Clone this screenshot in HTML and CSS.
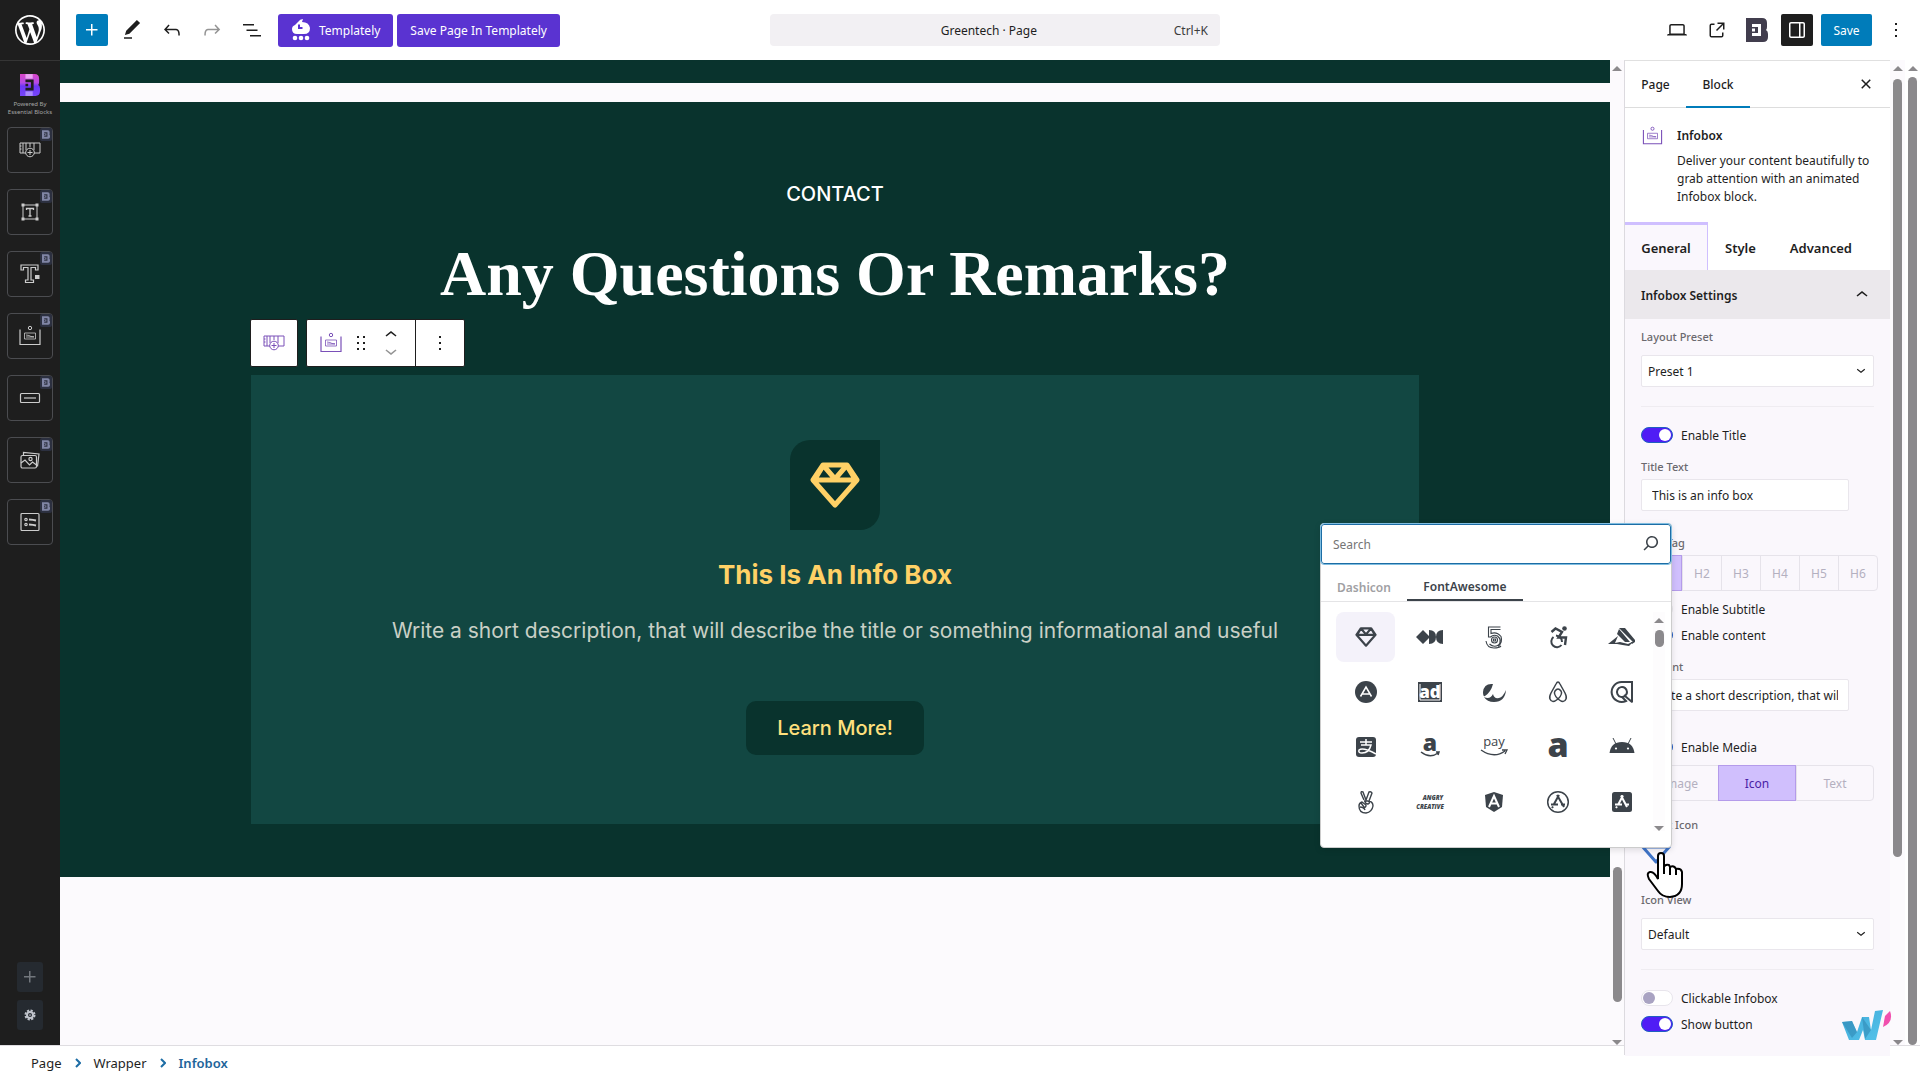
FILE: index.html
```html
<!DOCTYPE html>
<html lang="en">
  <head>
    <meta charset="UTF-8" />
    <meta name="viewport" content="width=device-width, initial-scale=1.0" />
    <title>Greentech · Page</title>
    <link rel="stylesheet" href="styles.css">
  </head>
  <body>
    <svg class="sprite" aria-hidden="true">
      <symbol id="diamond" viewBox="0 0 50 46">
        <path fill="none" stroke="currentColor" stroke-width="5" stroke-linejoin="round" d="M13 3h24l10 15-22 25L3 18zM3 18h44M13 3l12 14L37 3M13 4L5 17M37 4l8 13" />
      </symbol>
      <symbol id="eb" viewBox="0 0 22 24">
        <path fill-rule="evenodd" d="M0 0h16q5 0 5 5v4q0 2-1 3 2 1 2 4v3q0 5-5 5H0zM6 6v3h6v6H6v3h9V6zM6 10.500v3h3v-3z" />
      </symbol>
      <symbol id="infobox" viewBox="0 0 22 22">
        <g fill="none" stroke="currentColor">
          <path stroke-width="1.200" d="M1 4.500v15h20v-15" />
          <circle cx="11" cy="3" r="1.700" />
          <path stroke-width=".8" d="M5.500 8h11v6h-11zM7 10l3 .5 2 1 3 .3M7 12h8" />
        </g>
      </symbol>
      <symbol id="wrapper" viewBox="0 0 22 16">
        <g fill="none" stroke="currentColor">
          <path d="M7 11H1V1h20v10h-6M4 1v10M7 1v7M11 1v4M15 1v7M1 4h1.500M1 7h1.500" />
          <circle cx="11" cy="10.500" r="4.300" />
          <path d="M11 8v5M8.500 10.500h5" />
        </g>
      </symbol>
      <symbol id="up" viewBox="0 0 24 24"><path d="M6.500 12.400L12 8l5.500 4.400-.9 1.200L12 10l-4.500 3.600-1-1.200z" /></symbol>
      <symbol id="down" viewBox="0 0 24 24"><path d="M17.500 11.600L12 16l-5.500-4.400.9-1.200L12 14l4.500-3.600 1 1.200z" /></symbol>
      <symbol id="more" viewBox="0 0 24 24"><path d="M13 19h-2v-2h2v2zm0-6h-2v-2h2v2zm0-6h-2V5h2v2z" /></symbol>
      <symbol id="plus" viewBox="0 0 24 24"><path d="M11 12.500V17.500H12.500V12.500H17.500V11H12.500V6H11V11H6V12.500H11Z" /></symbol>
      <linearGradient id="ebfill" x1="0" y1="0" x2="0" y2="1">
        <stop offset="0" stop-color="#d946c8" /><stop offset=".4" stop-color="#b44be6" /><stop offset=".55" stop-color="#6c35f5" /><stop offset="1" stop-color="#7646fa" />
      </linearGradient>
      <linearGradient id="wfill" x1="0" y1="0" x2="1" y2="1">
        <stop offset="0" stop-color="#3fa9d8" /><stop offset="1" stop-color="#55c3ea" />
      </linearGradient>
    </svg>

    <div class="editor">
      <nav class="rail" aria-label="Quick blocks">
        <a class="wp" href="#" aria-label="WordPress">
          <svg viewBox="0 0 20 20"><path d="M20 10c0-5.510-4.490-10-10-10C4.480 0 0 4.490 0 10c0 5.520 4.480 10 10 10 5.510 0 10-4.480 10-10zM7.780 15.370L4.370 6.220c.55-.02 1.170-.08 1.170-.08.5-.06.44-1.130-.06-1.110 0 0-1.450.11-2.370.11-.18 0-.37 0-.58-.01C4.120 2.690 6.870 1.110 10 1.110c2.330 0 4.450.87 6.050 2.340-.68-.11-1.650.39-1.650 1.580 0 .74.45 1.360.9 2.100.35.61.55 1.360.55 2.460 0 1.490-1.400 5-1.400 5l-3.030-8.370c.54-.02.82-.17.82-.17.5-.05.44-1.250-.06-1.220 0 0-1.440.12-2.380.12-.87 0-2.330-.12-2.330-.12-.5-.03-.56 1.200-.06 1.220l.92.08 1.260 3.410zM17.410 10c.24-.64.74-1.870.43-4.250.7 1.290 1.050 2.710 1.050 4.250 0 3.290-1.730 6.240-4.400 7.780.97-2.590 1.940-5.200 2.920-7.780zM6.100 18.090C3.120 16.650 1.110 13.530 1.110 10c0-1.300.23-2.480.72-3.590C3.250 10.300 4.670 14.200 6.100 18.090zm4.030-6.630l2.580 6.980c-.86.29-1.760.45-2.710.45-.79 0-1.570-.11-2.290-.33.81-2.380 1.620-4.740 2.420-7.100z" /></svg>
        </a>
        <div class="powered">
          <svg viewBox="0 0 22 24"><use href="#eb" fill="url(#ebfill)" /><path fill="#e9a5f2" d="M6 0h8v5H6z" /><path fill="#a98bfb" d="M6 19h8v5H6z" /></svg>
          <span>Powered By<br />Essential Blocks</span>
        </div>
        <div class="blocks">
          <button aria-label="Wrapper"><svg class="icon wide"><use href="#wrapper" /></svg><i><svg><use href="#eb" /></svg></i></button>
          <button aria-label="Text">
            <svg class="icon" viewBox="0 0 22 22"><g fill="none" stroke="currentColor"><path d="M4 4h14v14H4z" /><path stroke-width="1.300" d="M7.500 9V7.500h7V9M11 7.500V15M9.500 15h3" /></g><path d="M2.500 2.500h3v3h-3zM16.500 2.500h3v3h-3zM2.500 16.500h3v3h-3zM16.500 16.500h3v3h-3z" /></svg><i><svg><use href="#eb" /></svg></i>
          </button>
          <button aria-label="Heading">
            <svg class="icon" viewBox="0 0 22 22"><path fill="none" stroke="currentColor" stroke-width="1.200" d="M2 2h17v5h-2.500V4.500h-4.500v12.500h2.500v2.500H6.500V17H9V4.500H4.500V7H2z" /><path d="M16 12h4.500v4H16z" /></svg><i><svg><use href="#eb" /></svg></i>
          </button>
          <button aria-label="Infobox"><svg class="icon"><use href="#infobox" /></svg><i><svg><use href="#eb" /></svg></i></button>
          <button aria-label="Button">
            <svg class="icon" viewBox="0 0 22 22"><g fill="none" stroke="currentColor" stroke-width="1.200"><rect x="1.500" y="6.500" width="19" height="9" rx="1" /><path d="M5 11h12" /></g></svg><i><svg><use href="#eb" /></svg></i>
          </button>
          <button aria-label="Image gallery">
            <svg class="icon" viewBox="0 0 22 22"><g fill="none" stroke="currentColor" stroke-width="1.200"><rect x="2" y="6.500" width="15.500" height="12.500" rx="1.500" /><path d="M4.500 6V3.500l15.500 1.500-1.500 12.500M2 14l4-3 4.500 5 3-3 4 3" /><circle cx="11.500" cy="10" r="1.600" /></g></svg><i><svg><use href="#eb" /></svg></i>
          </button>
          <button aria-label="Form">
            <svg class="icon" viewBox="0 0 22 22"><g fill="none" stroke="currentColor" stroke-width="1.200"><rect x="2" y="2.500" width="18" height="17" rx="1" /><circle cx="7" cy="8.500" r="1.200" /><circle cx="7" cy="13.500" r="1.200" /><path stroke-width="1.800" d="M10 8.500l4 .3 3 .7M10 13.500l4 .3 3 .7" /></g></svg><i><svg><use href="#eb" /></svg></i>
          </button>
        </div>
        <div class="rail-end">
          <button aria-label="Add block"><svg><use href="#plus" /></svg></button>
          <button class="gear" aria-label="Settings"><svg viewBox="0 0 24 24"><g fill="none" stroke="currentColor"><circle cx="12" cy="12" r="4.500" stroke-width="3" /><circle cx="12" cy="12" r="6.800" stroke-width="3" stroke-dasharray="3.300 2.040" /></g><circle cx="12" cy="12" r="1.300" /></svg></button>
        </div>
      </nav>

      <div class="main">
        <header class="topbar">
          <div class="tools">
            <button class="add" aria-label="Add block"><svg><use href="#plus" /></svg></button>
            <button aria-label="Edit"><svg viewBox="0 0 24 24"><path d="M20.100 5.100L16.900 2 6.200 12.700l-1.300 4.400 4.500-1.300L20.100 5.100zM4 20.800h8v-1.500H4v1.500z" /></svg></button>
            <button aria-label="Undo"><svg viewBox="0 0 24 24"><path d="M18.300 11.700c-.6-.6-1.400-.9-2.300-.9H6.700l2.900-3.300-1.100-1-4.500 5L8.500 16l1-1-2.700-2.700H16c.5 0 .9.2 1.300.5 1 1 1 3.400 1 4.500v.3h1.500v-.2c0-1.500 0-4.300-1.500-5.700z" /></svg></button>
            <button aria-label="Redo" class="muted"><svg viewBox="0 0 24 24"><path d="M15.600 6.500l-1.100 1 2.900 3.300H8c-.9 0-1.700.3-2.300.9-1.400 1.500-1.400 4.200-1.400 5.600v.2h1.500v-.3c0-1.100 0-3.500 1-4.500.3-.3.7-.5 1.300-.5h9.200L14.500 15l1.100 1.100 4.600-4.600-4.600-5z" /></svg></button>
            <button aria-label="List view"><svg viewBox="0 0 24 24"><path d="M3 6h11v1.500H3V6Zm3.500 5.500h11V13h-11v-1.500ZM21 17H10v1.500h11V17Z" /></svg></button>
          </div>
          <div class="templately">
            <button><svg viewBox="0 0 20 22"><path d="M7 3Q9 0 12 0l-1 3q7 0 8 6 0 6-6 6H6Q1 15 1 10q0-3 3-4z" /><path class="cut" d="M8 5.500v3.500h3.500" /><circle cx="4" cy="19" r="2.300" /><circle cx="10" cy="19" r="2.300" /><circle cx="16" cy="19" r="2.300" /></svg>Templately</button>
            <button>Save Page In Templately</button>
          </div>
          <button class="command"><span>Greentech · Page</span><kbd>Ctrl+K</kbd></button>
          <div class="actions">
            <button aria-label="View"><svg viewBox="0 0 24 24"><path d="M20.500 16h-.7V8c0-1.100-.9-2-2-2H6.200c-1.100 0-2 .9-2 2v8h-.7c-.8 0-1.500.7-1.500 1.500h20c0-.8-.7-1.500-1.500-1.500zM5.700 8c0-.3.2-.5.5-.5h11.600c.3 0 .5.2.5.5v7.600H5.700V8z" /></svg></button>
            <button aria-label="View page"><svg viewBox="0 0 24 24"><path d="M19.500 4.500h-7V6h4.440l-5.970 5.970 1.060 1.060L18 7.060v4.440h1.500v-7Zm-13 1a2 2 0 0 0-2 2v10a2 2 0 0 0 2 2h10a2 2 0 0 0 2-2v-3H17v3a.5.5 0 0 1-.5.5h-10a.5.5 0 0 1-.5-.5v-10a.5.5 0 0 1 .5-.5h3V5.500h-3Z" /></svg></button>
            <button aria-label="Essential Blocks" class="eb"><svg><use href="#eb" /></svg></button>
            <button aria-label="Settings" class="pressed"><svg viewBox="0 0 24 24"><path d="M18 4H6c-1.100 0-2 .9-2 2v12c0 1.100.9 2 2 2h12c1.100 0 2-.9 2-2V6c0-1.100-.9-2-2-2zm-4 14.500H6c-.3 0-.5-.2-.5-.5V6c0-.3.2-.5.5-.5h8v13zm4.500-.5c0 .3-.2.5-.5.5h-2.500v-13H18c.3 0 .5.2.5.5v12z" /></svg></button>
            <button class="save">Save</button>
            <button aria-label="Options"><svg><use href="#more" /></svg></button>
          </div>
        </header>

        <div class="work">
          <main class="canvas">
            <section class="previous"></section>
            <section class="contact">
              <p class="eyebrow">CONTACT</p>
              <h1>Any Questions Or Remarks?</h1>
              <article class="card">
                <div class="block-toolbar">
                  <button aria-label="Select parent block: Wrapper" class="parent"><svg><use href="#wrapper" /></svg></button>
                  <div class="group">
                    <button aria-label="Infobox" class="type"><svg><use href="#infobox" /></svg></button>
                    <button aria-label="Drag" class="drag"><svg viewBox="0 0 24 24"><path d="M8 7h2V5H8v2zm0 6h2v-2H8v2zm0 6h2v-2H8v2zm6-14v2h2V5h-2zm0 8h2v-2h-2v2zm0 6h2v-2h-2v2z" /></svg></button>
                    <div class="movers">
                      <button aria-label="Move up"><svg><use href="#up" /></svg></button>
                      <button aria-label="Move down" class="muted"><svg><use href="#down" /></svg></button>
                    </div>
                    <button aria-label="Options" class="options"><svg><use href="#more" /></svg></button>
                  </div>
                </div>
                <div class="card-icon"><svg><use href="#diamond" /></svg></div>
                <h2>This Is An Info Box</h2>
                <p>Write a short description, that will describe the title or something informational and useful</p>
                <a class="cta" href="#">Learn More!</a>
              </article>
            </section>
          </main>
          <div class="bar canvas-bar"><b></b></div>

          <aside class="panel">
            <div class="panel-tabs">
              <button>Page</button>
              <button class="on">Block</button>
              <button class="close" aria-label="Close settings"><svg viewBox="0 0 24 24"><path d="M12 13.060l3.712 3.713 1.061-1.060L13.061 12l3.712-3.712-1.060-1.060L12 10.938 8.288 7.227l-1.061 1.060L10.939 12l-3.712 3.712 1.060 1.061L12 13.061z" /></svg></button>
            </div>
            <div class="about">
              <svg><use href="#infobox" /></svg>
              <div>
                <h3>Infobox</h3>
                <p>Deliver your content beautifully to grab attention with an animated Infobox block.</p>
              </div>
            </div>
            <div class="modes">
              <button class="on">General</button>
              <button>Style</button>
              <button>Advanced</button>
            </div>
            <button class="fold">Infobox Settings<svg><use href="#up" /></svg></button>
            <div class="settings">
              <label class="label" for="preset">Layout Preset</label>
              <div class="select"><select id="preset"><option>Preset 1</option><option>Preset 2</option></select><svg><use href="#down" /></svg></div>
              <hr />
              <label class="switch"><input type="checkbox" checked />Enable Title</label>
              <label class="label field" for="title">Title Text</label>
              <input class="text" id="title" type="text" value="This is an info box" />
              <span class="label tag-label">Title Tag</span>
              <div class="tags">
                <button class="on">H1</button><button>H2</button><button>H3</button><button>H4</button><button>H5</button><button>H6</button>
              </div>
              <label class="switch"><input type="checkbox" />Enable Subtitle</label>
              <label class="switch"><input type="checkbox" checked />Enable content</label>
              <label class="label field" for="content">Content</label>
              <input class="text" id="content" type="text" value="Write a short description, that will describe the title" />
              <label class="switch media"><input type="checkbox" checked />Enable Media</label>
              <div class="kinds">
                <button>Image</button><button class="on">Icon</button><button>Text</button>
              </div>
              <span class="label field">Select Icon</span>
              <div class="picker">
                <button class="picked" aria-label="Choose icon"><svg><use href="#diamond" /></svg></button>
                <div class="popup">
                  <div class="search">
                    <input type="search" placeholder="Search" aria-label="Search icons" />
                    <svg viewBox="0 0 24 24"><path d="M13 5c-3.300 0-6 2.700-6 6 0 1.400.5 2.700 1.300 3.700l-3.800 3.800 1.100 1.100 3.800-3.800c1 .8 2.300 1.300 3.700 1.300 3.300 0 6-2.700 6-6S16.300 5 13 5zm0 10.500c-2.500 0-4.500-2-4.500-4.500s2-4.500 4.500-4.500 4.500 2 4.500 4.500-2 4.500-4.500 4.500z" /></svg>
                  </div>
                  <div class="sets"><button>Dashicon</button><button class="on">FontAwesome</button></div>
                  <div class="results">
                    <div class="grid">
                      <button class="on" aria-label="Gem"><svg class="gem"><use href="#diamond" /></svg></button>
                      <button aria-label="42 group"><svg viewBox="0 0 28 22"><path d="M0 11l7-7 6 6v2l-6 6zM13 4q7 0 7 7t-7 7zM27 4v14q-7 0-7-7t7-7z" /></svg></button>
                      <button aria-label="500px"><svg viewBox="0 0 28 22"><g fill="none" stroke="currentColor" stroke-width="1.100"><path d="M20.500 1H8.500v10h2q3-3 7-1 5 4 1 9-5 3-9-1M20.500 3.500H11v4q6-2 10 3 2 6-3 10" /><circle cx="14.500" cy="14" r="3" /><path d="M6 15q1 7 8 7 5 0 7-2M13.500 13h2v2h-2z" /></g></svg></button>
                      <button aria-label="Accessible"><svg viewBox="0 0 28 22"><circle cx="20.500" cy="2.500" r="2.300" /><g fill="none" stroke="currentColor" stroke-width="2.400"><path d="M7.500 6l4-3.500L18 6l-3.500 5.500H22l-1 7.500" /><path stroke-width="2" d="M9.500 11a5.700 5.700 0 1 0 8 8" /><path stroke-width="2" d="M12 9.500q6 1 6 6.500" /></g></svg></button>
                      <button aria-label="Accusoft"><svg viewBox="0 0 28 22"><path d="M11 2h6l10 12v2l-3 2-1-2h2zM11 3l11 13h-5L9 8zM0 18l10-8-3 7 5-1 8 2 6-3-5 5q-7-1-12-2z" /></svg></button>

                      <button aria-label="Adn"><svg viewBox="0 0 28 22"><circle cx="14" cy="11" r="11" /><path class="cut" d="M8.500 15.500L14 6l5.500 9.500M10.500 13h7" /></svg></button>
                      <button aria-label="Ad"><svg viewBox="0 0 28 22"><path d="M2 1h24v20H2z" /><path class="cut thin" d="M4 3v16h20V3" /><text class="white" x="14" y="17" font-size="17">ad</text></svg></button>
                      <button aria-label="Adversal moon"><svg viewBox="0 0 28 22"><path d="M13 3Q4 2 3 11q0 5 2 4 6-4 8-12zM26 9q-1 12-12 12-7 0-10-5 6 3 9-3 1 5 6 4 4-1 7-8z" /></svg></button>
                      <button aria-label="Airbnb"><svg viewBox="0 0 28 22"><path fill="none" stroke="currentColor" stroke-width="1.500" d="M14 18q-6 5-8 0-1-2 1-6l5-9q2-4 4 0l5 9q2 4 1 6-2 5-8 0-5-5-3-8 3-4 6 0 2 3-3 8z" /></svg></button>
                      <button aria-label="Algolia"><svg viewBox="0 0 28 22"><g fill="none" stroke="currentColor" stroke-width="2"><path d="M24 21.500V1H14a10 10 0 1 0 4 19l-4-4" /><path d="M24 21l-7-6a5 5 0 1 1 2-4q0 3-3 4" /></g></svg></button>

                      <button aria-label="Alipay"><svg viewBox="0 0 28 22"><rect x="4" y="1" width="20" height="20" rx="3" /><path class="cut" d="M8 6h12M14 3v6M9 9h10q-2 8-9 8-4 0-3-3 4-3 17 4" /></svg></button>
                      <button aria-label="Amazon"><svg viewBox="0 0 28 22"><text x="14" y="15" font-size="23">a</text><path fill="none" stroke="currentColor" stroke-width="1.500" d="M5 16q9 7 17 1M20 16l3 0-1 3" /></svg></button>
                      <button aria-label="Amazon pay"><svg viewBox="0 0 28 22"><text class="light" x="14" y="10" font-size="13">pay</text><path fill="none" stroke="currentColor" stroke-width="1.300" d="M1 14q13 9 24 1M22 14h5l-2 4" /></svg></button>
                      <button aria-label="Amilia"><svg viewBox="0 0 28 22"><text x="14" y="21" font-size="34">a</text></svg></button>
                      <button aria-label="Android"><svg viewBox="0 0 28 22"><path d="M1.500 17Q3 6 14 6t12.500 11z" /><path stroke="currentColor" d="M5 2l3 6M23 2l-3 6" /><circle class="white" cx="8" cy="12.500" r="1.100" /><circle class="white" cx="20" cy="12.500" r="1.100" /></svg></button>

                      <button aria-label="Angellist"><svg viewBox="0 0 28 22"><g fill="none" stroke="currentColor" stroke-width="1.400"><path d="M12 9L9 2q0-2 2-1l3 8 3-8q2-1 3 1l-3 8q4 1 4 5-1 6-7 7-7 0-7-7 0-3 3-4l4 3q0 3-2 2l-3-4" /><path d="M12 10h4q3 2 0 3-3 0-3-3M8 16q4 0 5 3" /></g></svg></button>
                      <button aria-label="Angry creative"><svg viewBox="0 0 28 22"><g class="slant"><text x="17" y="9" font-size="6">ANGRY</text><text x="14" y="18" font-size="6">CREATIVE</text></g></svg></button>
                      <button aria-label="Angular"><svg viewBox="0 0 28 22"><path d="M14 1l9 3-1 12-8 5-8-5L5 4z" /><path class="cut bold" d="M9 16l5-11 5 11M11 12.500h6" /></svg></button>
                      <button aria-label="App store"><svg viewBox="0 0 28 22"><circle cx="14" cy="11" r="10.300" fill="none" stroke="currentColor" stroke-width="1.500" /><path fill="none" stroke="currentColor" stroke-width="2" d="M13 4l7 12M15 4L10 13M7 13.500h7M17 13.500h4M9 15.500l-1 1.500" /></svg></button>
                      <button aria-label="App store ios"><svg viewBox="0 0 28 22"><rect x="4" y="1" width="20" height="20" rx="2.500" /><path class="cut bold" d="M13 4.500l6 11.500M15 4.500L10.500 13M7 13.500h7M17 13.500h4M9 15.500l-1 1.500" /></svg></button>
                    </div>
                    <div class="bar popup-bar"><b></b></div>
                  </div>
                </div>
                <svg class="pointer" viewBox="0 0 38 46"><path d="M12 27V4q0-3 3-3t3 3v11q1-3 5-2l1 2q4-2 6 2 5-1 6 3v12q0 12-12 13-8 0-12-6L3 27q-3-6 1-7 4-1 8 7z" /><path d="M18 14v8M24 15v8M30 17v6" /></svg>
              </div>
              <label class="label view" for="view">Icon View</label>
              <div class="select"><select id="view"><option>Default</option><option>Stacked</option></select><svg><use href="#down" /></svg></div>
              <hr />
              <label class="switch"><input type="checkbox" />Clickable Infobox</label>
              <label class="switch"><input type="checkbox" checked />Show button</label>
            </div>
            <svg class="brand" viewBox="0 0 50 30"><path fill="url(#wfill)" d="M0 12l10-1 5 11 5-15h7l2 13 4-19 8-1-7 30H23l-2-10-4 10H7z" /><path fill="#2b80ab" fill-opacity=".5" d="M0 12l10-1 5 11-5 6zM20 7l9 13-6 9z" /><path fill="#f14fae" d="M48 1q4 11-7 16l2-11z" /></svg>
          </aside>
          <div class="bar panel-bar"><b></b></div>
          <div class="bar page-bar"><b></b></div>
        </div>
      </div>
    </div>

    <footer class="crumbs">
      <a href="#">Page</a>
      <svg viewBox="0 0 6 10"><path d="M1 1l4 4-4 4" /></svg>
      <a href="#">Wrapper</a>
      <svg viewBox="0 0 6 10"><path d="M1 1l4 4-4 4" /></svg>
      <a href="#" class="current">Infobox</a>
    </footer>
  </body>
</html>
```
FILE: styles.css
```css
* {
  box-sizing: border-box;
}
body {
  margin: 0;
  height: 100vh;
  display: flex;
  flex-direction: column;
  overflow: hidden;
  font-family: "Noto Sans", "Open Sans", sans-serif;
  font-size: 12px;
  color: #1e1e1e;
  background: #fff;
}
h1,
h2,
h3,
p {
  margin: 0;
}
button {
  display: flex;
  align-items: center;
  justify-content: center;
  padding: 0;
  border: 0;
  background: none;
  font: inherit;
  color: inherit;
  cursor: pointer;
}
input,
select {
  font: inherit;
  color: #1e1e1e;
}
a {
  color: inherit;
  text-decoration: none;
}
svg {
  display: block;
  fill: currentColor;
}
.sprite {
  position: absolute;
  width: 0;
  height: 0;
}
.muted {
  color: #949494;
}
.editor {
  flex: 1;
  min-height: 0;
  display: flex;
}

/* left rail */
.rail {
  width: 60px;
  display: flex;
  flex-direction: column;
  align-items: center;
  background: #1e1e1e;
  color: #ccc;
}
.wp {
  width: 60px;
  height: 61px;
  padding: 15px;
  color: #fff;
  border-bottom: 1px solid #353535;
}
.powered {
  display: flex;
  flex-direction: column;
  align-items: center;
  margin-top: 13px;
  font-size: 6px;
  line-height: 8px;
  text-align: center;
  color: #a5a5a5;
}
.powered svg {
  width: 20px;
  height: 22px;
  margin-bottom: 4px;
}
.blocks {
  display: flex;
  flex-direction: column;
  gap: 16px;
  margin-top: 11px;
}
.blocks button {
  position: relative;
  width: 46px;
  height: 46px;
  border: 1px solid #4b4c50;
  border-radius: 4px;
}
.blocks .icon {
  width: 22px;
  height: 22px;
}
.blocks .wide {
  height: 16px;
}
.blocks i {
  position: absolute;
  top: 0;
  right: 0;
  padding: 2px;
  border-radius: 2px;
  background: #2c3040;
  color: #8085a5;
}
.blocks i svg {
  width: 8px;
  height: 9px;
}
.rail-end {
  margin-top: auto;
  margin-bottom: 15px;
  display: flex;
  flex-direction: column;
  gap: 8px;
}
.rail-end button {
  width: 26px;
  height: 30px;
  border-radius: 3px;
  background: #252a30;
  color: #72777d;
}
.rail-end svg {
  width: 24px;
  height: 24px;
}
.rail-end .gear {
  color: #c0c4cc;
}
.rail-end .gear svg {
  width: 16px;
  height: 16px;
}

/* top bar */
.main {
  flex: 1;
  min-width: 0;
  display: flex;
  flex-direction: column;
}
.topbar {
  position: relative;
  height: 60px;
  padding: 0 8px 0 16px;
  display: flex;
  align-items: center;
}
.tools,
.actions {
  display: flex;
  align-items: center;
  gap: 8px;
}
.tools button,
.actions button {
  width: 32px;
  height: 32px;
}
.topbar svg {
  width: 24px;
  height: 24px;
}
.tools .add,
.actions .save {
  background: #007cba;
  color: #fff;
  border-radius: 2px;
}
.templately {
  display: flex;
  gap: 4px;
  margin-left: 10px;
}
.templately button {
  height: 33px;
  padding: 0 13px;
  gap: 8px;
  border-radius: 3px;
  background: #5a33d1;
  color: #fff;
}
.templately svg {
  width: 20px;
  height: 22px;
}
.templately .cut {
  fill: none;
  stroke: #5a33d1;
  stroke-width: 2;
}
.command {
  position: absolute;
  left: 50%;
  width: 450px;
  height: 32px;
  margin-left: -220px;
  padding: 0 12px;
  border-radius: 4px;
  background: #f2f0f3;
}
.command span {
  flex: 1;
  padding-left: 22px;
}
.command kbd {
  font: inherit;
  color: #3c3c3c;
}
.actions {
  margin-left: auto;
}
.actions .eb {
  color: #413d4d;
}
.actions .pressed {
  background: #1e1e1e;
  color: #fff;
  border-radius: 2px;
}
.actions .save {
  width: 51px;
}

/* canvas */
.work {
  flex: 1;
  min-height: 0;
  display: flex;
}
.canvas {
  flex: 1;
  min-width: 0;
  background: #fcfafd;
  font-family: Inter, Roboto, sans-serif;
}
.previous {
  height: 23px;
  margin-bottom: 19px;
  background: #09332d;
}
.contact {
  padding: 77px 191px 53px;
  background: #09332d;
  color: #fff;
  text-align: center;
}
.eyebrow {
  font-size: 20px;
  line-height: 30px;
  font-weight: 500;
}
.contact h1 {
  margin-top: 25px;
  font: bold 64px/80px "Liberation Serif", serif;
}
.card {
  position: relative;
  margin-top: 61px;
  padding: 65px 20px 69px;
  display: flex;
  flex-direction: column;
  align-items: center;
  background: #124742;
}
.card-icon {
  display: flex;
  align-items: center;
  justify-content: center;
  width: 90px;
  height: 90px;
  border-radius: 20px 0;
  background: #09332d;
  color: #ffd166;
}
.card-icon svg {
  width: 50px;
  height: 46px;
}
.card h2 {
  margin-top: 29px;
  font-size: 26px;
  line-height: 32px;
  color: #ffd166;
}
.card p {
  margin-top: 24px;
  font-size: 21px;
  line-height: 32px;
  color: #c9d0c6;
}
.cta {
  margin-top: 54px;
  padding: 0 31px;
  border-radius: 10px;
  background: #09332d;
  color: #ffe07d;
  font-size: 20px;
  line-height: 54px;
  font-weight: 500;
}
.block-toolbar {
  position: absolute;
  left: -1px;
  top: -56px;
  display: flex;
  gap: 8px;
  color: #1e1e1e;
}
.block-toolbar .parent,
.group {
  height: 48px;
  border: 1px solid #1e1e1e;
  border-radius: 2px;
  background: #fff;
}
.block-toolbar .parent {
  width: 48px;
  color: #7a50b8;
}
.parent svg {
  width: 22px;
  height: 16px;
}
.group {
  display: flex;
}
.type {
  width: 48px;
  color: #7a50b8;
}
.type svg {
  width: 22px;
  height: 22px;
}
.drag {
  width: 12px;
}
.block-toolbar .drag svg,
.movers svg,
.options svg {
  width: 24px;
  height: 24px;
  flex: none;
}
.movers {
  width: 48px;
  display: flex;
  flex-direction: column;
  align-items: center;
  justify-content: center;
}
.movers button {
  height: 16px;
}
.options {
  width: 49px;
  border-left: 1px solid #1e1e1e;
}

/* scrollbars */
.bar {
  display: flex;
  flex-direction: column;
  align-items: center;
  justify-content: space-between;
  width: 15px;
  padding: 6px 0 0;
  background: #fcfafd;
}
.bar::before,
.bar::after {
  content: "";
  border: 5px solid transparent;
  border-top: 0;
  border-bottom: 5px solid #8b898c;
}
.bar::after {
  border-top: 5px solid #8b898c;
  border-bottom: 0;
}
.bar b {
  width: 9px;
  border-radius: 5px;
  background: #8b898c;
}
.canvas-bar {
  width: 14px;
}
.canvas-bar b {
  height: 135px;
  margin-top: auto;
  margin-bottom: 38px;
}
.panel-bar b {
  height: 778px;
  margin-top: 8px;
  margin-bottom: auto;
}
.page-bar {
  background: #fff;
}
.page-bar b {
  flex: 1;
  margin-top: 6px;
}
.page-bar::after {
  display: none;
}

/* settings panel */
.panel {
  position: relative;
  width: 266px;
  margin-bottom: -10px;
  border-left: 1px solid #dcdadf;
  border-top: 1px solid #e0e0e0;
  background: #fff;
}
.panel-tabs {
  display: flex;
  height: 47px;
  border-bottom: 1px solid #ddd;
  font-weight: 500;
}
.panel-tabs button {
  width: 61px;
}
.panel-tabs .on {
  width: 64px;
  height: 47px;
  border-top: 2px solid transparent;
  border-bottom: 2px solid #007cba;
}
.panel-tabs .close {
  width: 24px;
  margin-left: auto;
  margin-right: 12px;
}
.close svg {
  width: 24px;
  height: 24px;
}
.about {
  display: flex;
  gap: 13px;
  padding: 18px 16px 16px;
}
.about svg {
  width: 23px;
  height: 20px;
  flex: none;
  color: #7a50b8;
}
.about h3 {
  font-size: 12px;
  line-height: 20px;
  font-weight: 600;
}
.about p {
  margin-top: 6px;
  margin-right: -10px;
  line-height: 18px;
}
.modes {
  display: flex;
  height: 48px;
  font-size: 13px;
  font-weight: 600;
}
.modes button {
  padding: 3px 17px 0;
}
.modes .on {
  width: 83px;
  padding: 0;
  border-top: 3px solid #cfbfff;
  border-right: 1px solid #cfbfff;
  background: #faf7fd;
}
.fold {
  width: 100%;
  height: 49px;
  padding: 1px 16px 0;
  justify-content: space-between;
  background: #ebe8ec;
  font-weight: 600;
}
.fold svg {
  width: 24px;
  height: 24px;
}
.settings {
  padding: 10px 16px 24px;
  background: #faf7fc;
}
.label {
  display: block;
  line-height: 16px;
  font-size: 11px;
  font-weight: 500;
  color: #6b696e;
}
.field {
  margin-top: 16px;
}
.select {
  position: relative;
  margin-top: 10px;
}
.select select {
  display: block;
  appearance: none;
  width: 100%;
  height: 32px;
  padding: 0 6px;
  border: 1px solid #e9e6ec;
  border-radius: 2px;
  background: #fff;
}
.select svg {
  position: absolute;
  right: 4px;
  top: 6px;
  width: 18px;
  height: 18px;
  pointer-events: none;
}
.settings hr {
  height: 1px;
  margin: 19px 0 20px;
  border: 0;
  background: #efecf1;
}
.switch {
  display: flex;
  align-items: center;
  gap: 8px;
  height: 16px;
  white-space: nowrap;
}
.switch + .switch,
.tags + .switch {
  margin-top: 10px;
}
.switch input {
  appearance: none;
  width: 32px;
  height: 16px;
  margin: 0;
  padding: 1px;
  border: 1px solid #e8e5ec;
  border-radius: 8px;
  background: #fff;
}
.switch input::before {
  content: "";
  display: block;
  width: 12px;
  height: 12px;
  border-radius: 50%;
  background: #a9a3c2;
}
.switch input:checked {
  border-color: #1f5fc0;
  background: #501df5;
}
.switch input:checked::before {
  margin-left: auto;
  background: #fff;
}
.text {
  display: block;
  width: 208px;
  height: 32px;
  margin-top: 4px;
  padding: 0 10px;
  border: 1px solid #e9e6ec;
  border-radius: 2px;
  background: #fff;
}
.tag-label {
  margin-top: 24px;
}
.tags,
.kinds {
  display: flex;
  height: 36px;
  border: 1px solid #e6e3ea;
  border-radius: 4px;
}
.tags {
  width: 237px;
  margin-top: 4px;
}
.kinds {
  margin-top: 10px;
}
.tags button,
.kinds button {
  flex: 1;
  color: #b4b0c0;
}
.tags button + button,
.kinds button + button {
  border-left: 1px solid #e6e3ea;
}
.tags .on,
.kinds .on,
.kinds button.on {
  margin: -1px 0;
  border: 1px solid #b49bea;
  background: #d0bffd;
  color: #4a21a6;
}
.media {
  margin-top: 28px;
}
.picker {
  position: relative;
  margin-top: 2px;
}
.picked {
  color: #3f74c8;
}
.picked svg {
  width: 30px;
  height: 30px;
}
.view {
  margin-top: 27px;
}

/* icon popup */
.popup {
  position: absolute;
  right: 202px;
  bottom: 17px;
  width: 352px;
  height: 325px;
  border: 1px solid #ccc;
  border-radius: 4px;
  background: #fff;
  box-shadow: 0 2px 6px rgba(0, 0, 0, 0.12);
  color: #3c434a;
}
.search {
  position: relative;
}
.search input {
  display: block;
  width: 100%;
  height: 40px;
  padding: 0 11px;
  border: 1px solid #1d6da5;
  border-radius: 3px;
  outline: 1px solid #7fbde0;
  background: #fff;
}
.search input::placeholder {
  color: #757575;
}
.search svg {
  position: absolute;
  right: 8px;
  top: 7px;
  width: 24px;
  height: 24px;
}
.sets {
  display: flex;
  height: 38px;
  border-bottom: 1px solid #e4e4e6;
  font-weight: 600;
}
.sets button {
  width: 86px;
  padding-top: 10px;
  color: #a0a0a3;
}
.sets .on {
  width: 116px;
  border-bottom: 2px solid #3c434a;
  color: #3c434a;
}
.results {
  display: flex;
  justify-content: space-between;
  padding: 10px 6px 0 13px;
}
.grid {
  display: grid;
  grid-template-columns: repeat(5, 64px);
  grid-auto-rows: 50px;
  row-gap: 5px;
}
.grid button {
  margin: 0 3px 0 2px;
  border-radius: 8px;
}
.grid .on {
  background: #f4f2fa;
}
.grid svg {
  width: 28px;
  height: 22px;
  overflow: visible;
}
.grid .gem {
  width: 22px;
  height: 20px;
}
.grid text {
  font-family: "Open Sans", sans-serif;
  font-weight: 800;
  text-anchor: middle;
}
.grid .light {
  font-weight: 500;
}
.grid .white {
  fill: #fff;
}
.grid .cut {
  fill: none;
  stroke: #fff;
  stroke-width: 1.5;
}
.grid .thin {
  stroke-width: 1;
}
.grid .bold {
  stroke-width: 2;
}
.grid .slant {
  font-style: italic;
}
.popup-bar {
  flex: none;
  height: 219px;
  width: 12px;
  margin-left: -1px;
  background: #fdfcfd;
}
.popup-bar b {
  height: 17px;
  margin-top: 7px;
  margin-bottom: auto;
}
.pointer {
  position: absolute;
  left: 5px;
  top: 17px;
  width: 38px;
  height: 46px;
  fill: #fff;
  stroke: #000;
  stroke-width: 2;
}
.brand {
  position: absolute;
  right: -2px;
  bottom: 15px;
  width: 50px;
  height: 30px;
}

/* breadcrumb */
.crumbs {
  height: 35px;
  padding: 0 31px;
  display: flex;
  align-items: center;
  gap: 13px;
  border-top: 1px solid #dfdde1;
  font-size: 13px;
}
.crumbs svg {
  width: 6px;
  height: 10px;
  fill: none;
  stroke: #1d6da5;
  stroke-width: 2;
}
.crumbs .current {
  color: #21649a;
  font-weight: 600;
}
```
